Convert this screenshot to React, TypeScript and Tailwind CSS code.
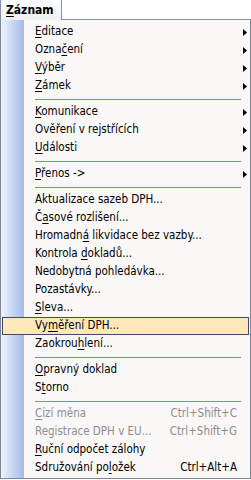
import React from "react";

type Entry =
  | { kind: "sep" }
  | {
      kind: "item";
      label: string;
      sub?: boolean;
      shortcut?: string;
      disabled?: boolean;
      active?: boolean;
    };

const entries: Entry[] = [
  { kind: "item", label: "&Editace", sub: true },
  { kind: "item", label: "Ozna&čení", sub: true },
  { kind: "item", label: "&Výběr", sub: true },
  { kind: "item", label: "&Zámek", sub: true },
  { kind: "sep" },
  { kind: "item", label: "&Komunikace", sub: true },
  { kind: "item", label: "Ověření v rejstřících", sub: true },
  { kind: "item", label: "&Události", sub: true },
  { kind: "sep" },
  { kind: "item", label: "&Přenos ->", sub: true },
  { kind: "sep" },
  { kind: "item", label: "Aktualizace sazeb DPH..." },
  { kind: "item", label: "Č&asové rozlišení..." },
  { kind: "item", label: "Hromadn&á likvidace bez vazby..." },
  { kind: "item", label: "Kontrola &dokladů..." },
  { kind: "item", label: "Nedobytná pohledávka..." },
  { kind: "item", label: "Pozastávky..." },
  { kind: "item", label: "&Sleva..." },
  { kind: "item", label: "Vy&měření DPH...", active: true },
  { kind: "item", label: "Zaokrou&hlení..." },
  { kind: "sep" },
  { kind: "item", label: "&Opravný doklad" },
  { kind: "item", label: "S&torno" },
  { kind: "sep" },
  { kind: "item", label: "&Cizí měna", disabled: true, shortcut: "Ctrl+Shift+C" },
  { kind: "item", label: "Registrace DPH v EU...", disabled: true, shortcut: "Ctrl+Shift+G" },
  { kind: "item", label: "&Ruční odpočet zálohy" },
  { kind: "item", label: "Sdružování po&ložek", shortcut: "Ctrl+Alt+A" },
];

// "&" marks the mnemonic letter, like in Windows resources
const Mnemonic = ({ text }: { text: string }) => {
  const i = text.indexOf("&");
  if (i < 0) return <>{text}</>;
  return (
    <>
      {text.slice(0, i)}
      <u className="underline-offset-[2px]">{text[i + 1]}</u>
      {text.slice(i + 2)}
    </>
  );
};

const Arrow = () => (
  <svg width="4" height="7" viewBox="0 0 4 7" className="block">
    <path d="M0 0 L4 3.5 L0 7 Z" fill="#000" />
  </svg>
);

export default function App() {
  return (
    <div
      className="w-[251px] h-[480px] bg-white text-[11.5px] leading-none text-black"
      style={{ fontFamily: '"DejaVu Sans Condensed", "DejaVu Sans", sans-serif' }}
    >
      {/* menu bar with the open top-level item */}
      <div className="flex h-[20px]">
        <div className="w-[62px] h-[20px] border-l border-r border-[#8592ad] bg-gradient-to-b from-[#fbfcfd] to-[#eef0f4] flex items-center pl-[5px] font-bold text-[12px]">
          <Mnemonic text="&Záznam" />
        </div>
        <div className="flex-1 border-b border-[#8592ad]" />
      </div>

      {/* dropdown */}
      <div className="w-[251px] border-l border-r border-b border-[#7d8496] pt-[3px] pb-px bg-[linear-gradient(to_right,#eef3fb_0px,#a2bce9_23px,#f9f8f7_23px)]">
        {entries.map((e, idx) => {
          if (e.kind === "sep") {
            return (
              <div key={idx} className="h-[8px] pt-[4px]">
                <div className="ml-[34px] mr-[9px] h-px bg-[#6f90cc]" />
              </div>
            );
          }
          const color = e.disabled ? "text-[#8d8d8d]" : "text-black";
          if (e.active) {
            return (
              <div
                key={idx}
                className={`mx-px h-[18px] flex items-center border border-[#3e4b6c] bg-[#ffe7bc] pl-[32px] ${color}`}
              >
                <span className="flex-1 whitespace-nowrap">
                  <Mnemonic text={e.label} />
                </span>
                <span className="w-[12px]" />
              </div>
            );
          }
          return (
            <div key={idx} className={`h-[18px] flex items-center pl-[34px] ${color}`}>
              <span className="flex-1 whitespace-nowrap">
                <Mnemonic text={e.label} />
              </span>
              {e.shortcut && <span className="whitespace-nowrap">{e.shortcut}</span>}
              <span className="w-[13px] flex justify-end pr-[3px]">{e.sub && <Arrow />}</span>
            </div>
          );
        })}
      </div>
    </div>
  );
}
